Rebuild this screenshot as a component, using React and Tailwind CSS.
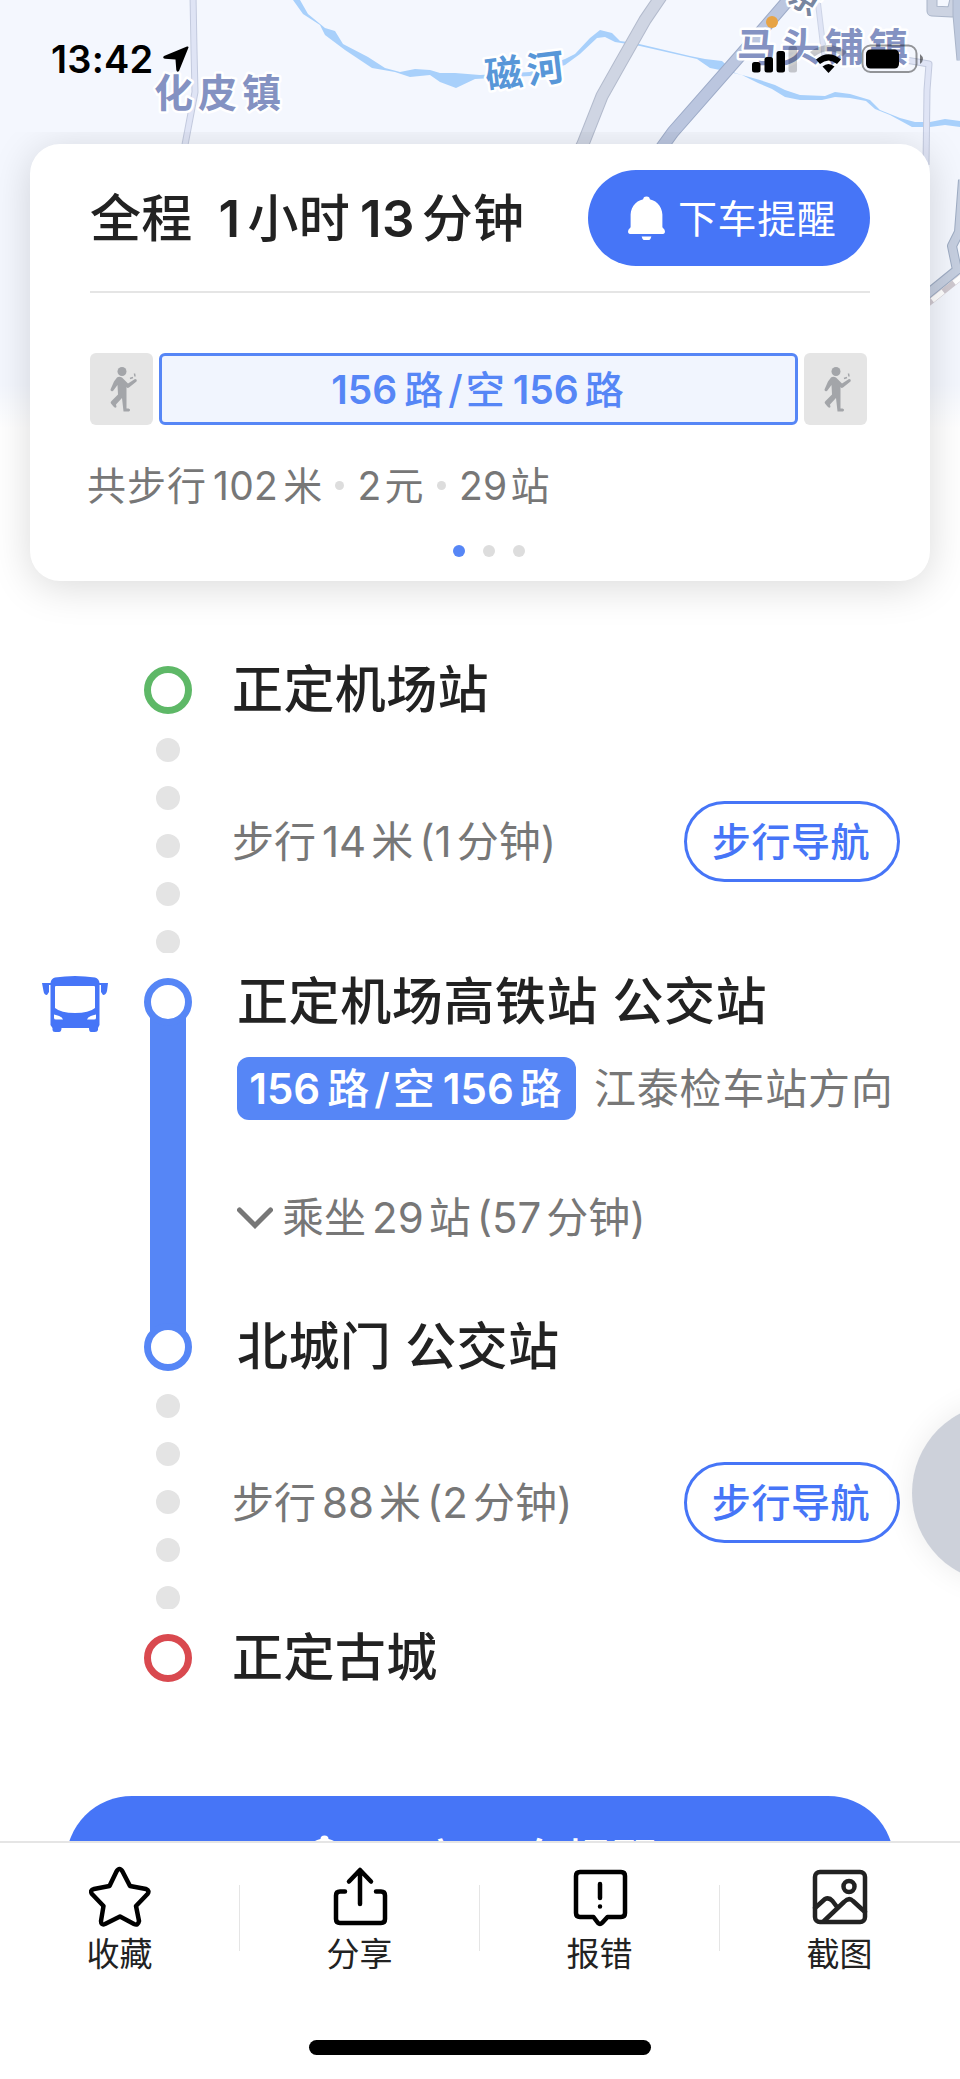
import React from 'react';

const river =
  'M293 0L303 14L320 25L325 35L345 50L372 68L395 72L410 77L430 75L440 82L456 88L475 79L530 76L565 65L580 54L597 38L605 37L615 42L640 46L697 59L710 68L725 71L742 75L758 83L772 89L785 97L800 100L822 100L835 97L850 98L866 101L875 109L890 115L912 127L930 127L945 125L960 127L960 121L945 119L930 122L915 122L900 118L880 110L870 100L850 94L835 92L825 96L800 95L785 90L775 85L760 80L735 73L722 61L705 59L690 56L635 43L620 41L612 33L600 30L590 38L575 54L565 59L530 72L480 75L455 73L440 73L430 70L415 69L400 72L385 68L368 57L343 44L335 31L325 28L308 14L300 0Z';

// road = wide casing line with a narrower fill line on top
const Road = ({ d, width, edge, fill }) => (
  <g fill="none" strokeLinejoin="round">
    <path d={d} stroke={edge} strokeWidth={width} />
    <path d={d} stroke={fill} strokeWidth={width - 2} />
  </g>
);

const MapBackdrop = () => (
  <div className="absolute inset-x-0 top-0 h-[428px] overflow-hidden bg-[#f4f7fe]">
    <svg width="960" height="428" viewBox="0 0 960 428" className="block">
      <path d={river} fill="#a8d0fb" />
      <Road d="M193 -5L194 50L195 92L184 150" width={7} edge="#c3cade" fill="#dfe4f5" />
      <Road d="M817 -5L823 45L825 60" width={6} edge="#cdd4e6" fill="#dfe4f5" />
      <Road d="M900 59L929 64L927 90L926 165" width={7} edge="#c3cade" fill="#dfe4f5" />
      <Road d="M662 -5L645 20L620 64L602 96L583 144L580 150" width={13} edge="#b3bbcd" fill="#cfd5e3" />
      <Road d="M790 -2L765 27L738 58L673 132L660 150" width={13} edge="#9dabc8" fill="#bbc6df" />
      <Road d="M932 -5L932 11L952 12L956 -5" width={11} edge="#aab5c9" fill="#ccd3e2" />
      <Road d="M958 -5L958 15L962 60" width={11} edge="#aab5c9" fill="#bfcadf" />
      <Road d="M963 180L959 232L952 246L957 270L925 296" width={10} edge="#9fadc4" fill="#c6cfe0" />
      <path d="M965 274L925 306" stroke="#cfc9d0" strokeWidth="6" />
      <path d="M965 274L925 306" stroke="#fff" strokeWidth="5" strokeDasharray="14 14" />
      <circle cx="772" cy="22" r="6" fill="#e7a345" />
      <g className="font-['Noto_Sans_CJK_SC',sans-serif] font-bold" stroke="#fff" strokeWidth="5" strokeLinejoin="round" paintOrder="stroke">
        <text x="154" y="107" fontSize="39" letterSpacing="5" fill="#8492c2">化皮镇</text>
        <text x="737" y="61" fontSize="39" letterSpacing="5" fill="#8492c2">马头铺镇</text>
        <text x="487" y="89" fontSize="37" letterSpacing="5" fill="#5897d8" transform="rotate(-7 487 89)">磁河</text>
        <text x="787" y="1" fontSize="30" fill="#7886a0" transform="rotate(32 787 1)">京</text>
      </g>
    </svg>
    <div className="absolute inset-x-0 bottom-0 h-[44px] bg-gradient-to-b from-white/0 to-white" />
  </div>
);

const StatusBar = () => (
  <div className="relative flex h-[132px] shrink-0 items-start justify-between pl-[51px] pr-[36px] pt-[36px]">
    <div className="flex items-center">
      <span className="font-['Inter',sans-serif] text-[38px] font-semibold leading-[46px] tracking-[0.2px] text-black">13:42</span>
      <svg width="26" height="26" viewBox="0 0 26 26" className="ml-[10px]">
        <path d="M24 0.5Q26 0 25.3 2L16 25Q14 27 13.3 24L12.5 13.5L2 12.7Q-1 12 1 10Z" />
      </svg>
    </div>
    <svg width="172" height="30" viewBox="752 44 172 30" className="mt-[8px]">
      <rect x="752" y="62" width="8.500" height="10.500" rx="2.500" />
      <rect x="764.500" y="57" width="8.500" height="15.500" rx="2.500" />
      <rect x="776.500" y="51" width="8.500" height="21.500" rx="2.500" />
      <rect x="788.500" y="46" width="8.500" height="26.500" rx="2.500" opacity="0.2" />
      <path d="M810 52Q828.500 38 847 52L842.500 56.500Q828.500 46 814.500 56.500Z" opacity="0.2" />
      <path d="M816 59.500Q828.500 49 841 59.500L837 64Q828.500 57 820 64Z" />
      <path d="M822.500 66.500Q828.500 61.500 834.500 66.500L828.500 73Z" />
      <rect x="862.500" y="45.500" width="54" height="26.500" rx="8" fill="none" stroke="#000" strokeOpacity="0.4" strokeWidth="2" />
      <rect x="866" y="49.500" width="33" height="19" rx="4.500" />
      <path d="M920 54Q926 59 920 64Z" opacity="0.5" />
    </svg>
  </div>
);

const BellIcon = ({ size = 40 }) => (
  <svg width={size} height={size * 1.15} viewBox="0 0 40 46" fill="currentColor">
    <circle cx="20" cy="4" r="3.500" />
    <path d="M20 3C29 3 36 10 36.300 19V32L38.500 34.500Q40 38.500 36.500 39H3.500Q0 38.500 1.500 34.500L3.700 32V19C4 10 11 3 20 3Z" />
    <path d="M15 41.500H25Q24 46 20 46T15 41.500Z" />
  </svg>
);

const WalkBox = () => (
  <div className="flex h-[72px] w-[63px] items-center justify-center rounded-[6px] bg-[#e5e5e5]">
    <svg width="30" height="48" viewBox="0 0 30 48" className="ml-[4px]" fill="#a3a5a9">
      <circle cx="13" cy="6.500" r="4.500" />
      <path d="M8 12.500Q10 11 13 12.500L19 18.500L26 14Q28.500 14 27.500 16.500L20 22.500Q18.500 23.500 17.500 22L17.500 32V43.500H19.500Q21.500 44 21 45.500L20 46.500H14.500L13 33L7 39.500L7.500 42Q6 43.500 4.500 41.500L2 38.500Q1 37 2.500 36L9 29.500L8.500 20L4 26Q1.500 27 1.500 24.500L5 16.500Z" />
      <path d="M21 13.500L24 12.500M25.500 8.500L26 11.500" stroke="#a3a5a9" strokeWidth="1.500" />
    </svg>
  </div>
);

// Latin runs get a small gap on both sides where they touch Chinese text
const Mixed = ({ text }) =>
  text
    .split(/(\(?\d+)/)
    .filter(Boolean)
    .map((part, i) => (
      <span key={i} className={/\d/.test(part) ? 'ml-[6px] mr-[5px]' : undefined}>
        {part}
      </span>
    ));

const LineName = () => (
  <>
    <span className="mr-[7px] font-semibold">156</span>路<span className="ml-[5px] mr-[3px]">/</span>空
    <span className="ml-[8px] mr-[6px] font-semibold">156</span>路
  </>
);

const SummaryCard = () => (
  <div className="mx-[30px] mt-[12px] flex h-[437px] shrink-0 flex-col rounded-[30px] bg-white px-[60px] shadow-[0_6px_40px_rgba(0,0,0,0.15)]">
    <div className="mt-[26px] flex h-[96px] items-center justify-between">
      <h1 className="whitespace-nowrap text-[51px] font-medium leading-none tracking-[0.3px] text-[#222]">
        全程<span className="ml-[26px] mr-[7px] font-semibold">1</span>小时<span className="ml-[10px] mr-[7px] font-semibold">13</span>分钟
      </h1>
      <button className="flex h-[96px] w-[282px] items-center rounded-full bg-[#4675f7] pl-[39px] text-white">
        <BellIcon size={39} />
        <span className="ml-[12px] whitespace-nowrap text-[39px] leading-none tracking-[0.6px]">下车提醒</span>
      </button>
    </div>
    <div className="mt-[25px] h-[2px] shrink-0 bg-[#e5e5e5]" />
    <div className="mt-[60px] flex gap-[6px]">
      <WalkBox />
      <div className="flex h-[72px] w-[639px] items-center justify-center rounded-[6px] border-[3px] border-[#5686f6] bg-[#f1f5fe] pr-[2px] text-[39px] font-medium leading-none text-[#5686f6]">
        <LineName />
      </div>
      <WalkBox />
    </div>
    <div className="-ml-[3px] mt-[40px] flex h-[40px] items-center whitespace-nowrap text-[39px] leading-none tracking-[0.3px] text-[#777]">
      <span className="tracking-[1px]">共步行</span>
      <span className="ml-[6px] mr-[5px]">102</span>米
      <i className="mx-[13px] size-[9px] rounded-full bg-[#ddd]" />2<span className="ml-[3px]">元</span>
      <i className="mx-[13px] size-[9px] rounded-full bg-[#ddd]" />29<span className="ml-[3px]">站</span>
    </div>
    <div className="mt-[40px] flex justify-center gap-[18px] pl-[18px]">
      <i className="size-[12px] rounded-full bg-[#5686f6]" />
      <i className="size-[12px] rounded-full bg-[#ddd]" />
      <i className="size-[12px] rounded-full bg-[#ddd]" />
    </div>
  </div>
);

const StationRow = ({ name, ring }) => (
  <div className="flex h-[48px] items-center pl-[144px]">
    <i className={`size-[48px] shrink-0 rounded-full border-[7.5px] bg-white ${ring}`} />
    <span className="-mt-[2px] ml-[40px] whitespace-nowrap text-[51px] font-medium leading-none tracking-[0.4px] text-[#222]">{name}</span>
  </div>
);

const WalkRow = ({ text, offset = 'mt-[87px]' }) => (
  <div className="flex h-[239px] items-start overflow-hidden pl-[156px]">
    <div className="flex flex-col gap-[24px] pt-[24px]">
      {[0, 1, 2, 3, 4].map((n) => (
        <i key={n} className="size-[24px] rounded-full bg-[#e4e4e4]" />
      ))}
    </div>
    <div className={`flex h-[81px] flex-1 items-center justify-between pl-[52px] pr-[60px] ${offset}`}>
      <span className="whitespace-nowrap text-[42px] leading-none text-[#777]">
        <Mixed text={text} />
      </span>
      <button className="h-[81px] w-[216px] rounded-full border-[3px] border-[#4675f7] pr-[2px] text-[39px] font-medium leading-none tracking-[0.6px] text-[#4675f7]">步行导航</button>
    </div>
  </div>
);

const BusIcon = () => (
  <svg width="66" height="56" viewBox="0 0 66 56" fill="#4675f7">
    <path fillRule="evenodd" d="M13 1.500Q33 -1.500 53 1.500Q57 2.500 57.500 7H66L65 15Q64 19 61 19L59 16V9H57.500V49L56 52V54Q55.500 56 53 56H49Q47 56 47 52H19.500Q19.500 56 17 56H13Q10.500 56 10.500 54V52L8.500 49V9H7V16L5 19Q2 19 1.500 15L0 7H8.500Q9 2.500 13 1.500ZM13 11V32Q19 37 33 37T53 32V11Q53 10 52 10H14Q13 10 13 11ZM12 38.500V42Q12 43.500 14 43.500H21Q20 40 12 38.500ZM54 38.500V42Q54 43.500 52 43.500H45Q46 40 54 38.500Z" />
  </svg>
);

const BusRow = () => (
  <div className="flex h-[393px] items-stretch">
    <div className="-mt-[2px] w-[144px] shrink-0 pl-[42px]">
      <BusIcon />
    </div>
    <div className="flex w-[48px] shrink-0 flex-col items-center">
      <i className="z-10 size-[48px] shrink-0 rounded-full border-[7.5px] border-[#5686f6] bg-white" />
      <div className="-my-[9px] w-[36px] flex-1 bg-[#5686f6]" />
      <i className="z-10 size-[48px] shrink-0 rounded-full border-[7.5px] border-[#5686f6] bg-white" />
    </div>
    <div className="flex flex-1 flex-col items-start whitespace-nowrap pl-[45px] leading-none">
      <span className="flex h-[46px] items-center text-[51px] font-medium tracking-[0.6px] text-[#222]">正定机场高铁站 公交站</span>
      <div className="mt-[33px] flex h-[63px] items-center">
        <span className="flex h-[63px] w-[339px] items-center justify-center rounded-[12px] bg-[#5686f6] pr-[2px] text-[42px] font-medium text-white">
          <LineName />
        </span>
        <span className="ml-[18px] text-[42px] tracking-[0.8px] text-[#777]">江泰检车站方向</span>
      </div>
      <div className="mt-[77px] flex h-[42px] items-center">
        <svg width="36" height="22" viewBox="0 0 36 22" fill="none" stroke="#777" strokeWidth="5" strokeLinecap="round">
          <path d="M2.500 3L18 18.500L33.500 3" />
        </svg>
        <span className="ml-[9px] text-[42px] text-[#777]">
          <Mixed text="乘坐29站(57分钟)" />
        </span>
      </div>
      <span className="mb-[1px] mt-auto flex h-[48px] items-center text-[51px] font-medium tracking-[0.4px] text-[#222]">北城门 公交站</span>
    </div>
  </div>
);

const icons = {
  star: <path d="M27.500 4.500Q30.500 -0.500 33.500 4.500L41 19L57 22Q61 24 58.500 27L47 39L50 54Q49 59 45 57L31 49.500L16 57Q12 58.500 12 54L14.500 39L3 27Q0.500 23 5 22L20.500 19Z" transform="translate(0 1)" />,
  share: (
    <>
      <path d="M31 38V5M20 15.500L31 4L42 15.500" />
      <path d="M16 25.500H11Q7 25.500 7 29.500V53Q7 57 11 57H52Q56 57 56 53V29.500Q56 25.500 52 25.500H47" />
    </>
  ),
  report: (
    <>
      <path d="M11 6H52Q56 6 56 10V47Q56 51 52 51H38.500L33 57Q31 59 29 57L24.500 51H11Q7 51 7 47V10Q7 6 11 6Z" />
      <path d="M31 18V32M31 40.500V40.600" />
    </>
  ),
  picture: (
    <>
      <rect x="6" y="6" width="50" height="50" rx="5" />
      <circle cx="40" cy="20.500" r="5.500" />
      <path d="M6 42L16 33Q20 31 23.500 35L28 41M15 55L35 36Q40 31 44 35L56 46" />
    </>
  ),
};

const tabs = [
  { icon: 'star', label: '收藏', color: '#000' },
  { icon: 'share', label: '分享', color: '#000' },
  { icon: 'report', label: '报错', color: '#000' },
  { icon: 'picture', label: '截图', color: '#222' },
];

const BottomBar = () => (
  <footer className="relative flex h-[238px] shrink-0 flex-col items-center border-t-2 border-[#e5e5e5] bg-white">
    <div className="grid w-full grid-cols-4">
      {tabs.map((tab) => (
        <div key={tab.label} className="relative flex flex-col items-center pt-[23px]">
          <svg width="62" height="62" viewBox="0 0 62 62" fill="none" stroke={tab.color} strokeWidth="4.500" strokeLinecap="round" strokeLinejoin="round">
            {icons[tab.icon]}
          </svg>
          <span className="-ml-px mt-[9px] text-[33px] leading-[34px] text-[#222]">{tab.label}</span>
          {tab.label !== '截图' && <i className="absolute right-0 top-[42px] h-[66px] w-px bg-[#e5e5e5]" />}
        </div>
      ))}
    </div>
    <div className="mb-[24px] mt-auto h-[15px] w-[342px] rounded-full bg-black" />
  </footer>
);

export default function App() {
  return (
    <div className="relative flex h-[2079px] w-[960px] flex-col overflow-hidden bg-white font-['Inter','Noto_Sans_CJK_SC',sans-serif]">
      <MapBackdrop />
      <StatusBar />
      <main className="relative flex flex-1 flex-col overflow-hidden">
        <SummaryCard />
        <div className="mt-[85px] shrink-0">
          <StationRow name="正定机场站" ring="border-[#5eb867]" />
          <WalkRow text="步行14米(1分钟)" />
          <div className="mt-[25px]">
            <BusRow />
          </div>
          <div className="-mt-px">
            <WalkRow text="步行88米(2分钟)" offset="mt-[92px]" />
          </div>
          <div className="mt-[25px]">
            <StationRow name="正定古城" ring="border-[#d9494f]" />
          </div>
        </div>
        <button className="mx-[66px] mt-[114px] flex h-[132px] shrink-0 items-center justify-center rounded-full bg-[#4675f7] text-[45px] font-medium leading-none text-white">
          <BellIcon size={47} />
          <span className="-mt-[4px] ml-[24px] tracking-[1px]">
            <span className="mr-[10px]">开启</span>下车提醒
          </span>
        </button>
        {/* floating assistive button, half off screen */}
        <div className="absolute -right-[132px] top-[1271px] size-[180px] rounded-full bg-[#cdd1da] shadow-[0_0_30px_rgba(0,0,0,0.08)]" />
      </main>
      <BottomBar />
    </div>
  );
}
